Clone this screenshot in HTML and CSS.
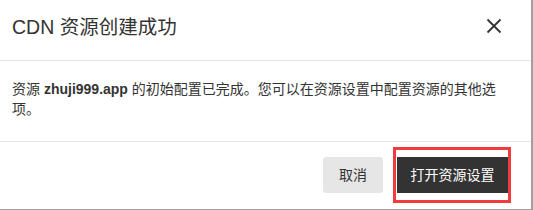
FILE: index.html
```html
<!DOCTYPE html>
<html lang="zh-CN">
<head>
<meta charset="utf-8">
<link rel="stylesheet" href="styles.css">
</head>
<body>
<div class="dialog">
  <div class="dialog-header">
    <h1 class="dialog-title">CDN 资源创建成功</h1>
    <button class="close-btn" aria-label="关闭">
      <svg width="16" height="16" viewBox="0 0 16 16"><path d="M1.5 1.5 L14.5 14.5 M14.5 1.5 L1.5 14.5" stroke="#333" stroke-width="1.8" fill="none"/></svg>
    </button>
  </div>
  <div class="dialog-body">
    <p class="message">资源 <b>zhuji999.app</b> 的初始配置已完成。您可以在资源设置中配置资源的其他选项。</p>
  </div>
  <div class="dialog-footer">
    <button class="btn btn-cancel">取消</button>
    <button class="btn btn-primary">打开资源设置</button>
  </div>
</div>
</body>
</html>
```

FILE: styles.css
```css
* { box-sizing: border-box; }
html, body {
  margin: 0;
  padding: 0;
}
body {
  width: 533px;
  height: 210px;
  background: #a0a0a0;
  font-family: "Liberation Sans", "Noto Sans CJK SC", sans-serif;
  color: #333;
  overflow: hidden;
}
.dialog {
  width: 531px;
  height: 209px;
  background: #fff;
  display: flex;
  flex-direction: column;
}
.dialog-header {
  height: 61px;
  border-bottom: 1px solid #e6e6e6;
  display: flex;
  justify-content: space-between;
  align-items: flex-start;
  padding: 15px 29px 0 12px;
}
.dialog-title {
  margin: 0;
  font-size: 19.5px;
  font-weight: normal;
  line-height: 24px;
  color: #333;
}
.close-btn {
  border: 0;
  background: none;
  padding: 0;
  margin-top: 3px;
  width: 16px;
  height: 16px;
  display: flex;
}
.dialog-body {
  height: 80px;
  padding: 18px 28px 0 12px;
}
.message {
  margin: 0;
  font-size: 14px;
  line-height: 20px;
}
.message b { font-weight: bold; }
.dialog-footer {
  border-top: 1px solid #e6e6e6;
  padding: 15px 23px 16px 12px;
  display: flex;
  justify-content: flex-end;
  gap: 14px;
}
.btn {
  height: 36px;
  border: 0;
  border-radius: 3px;
  font-family: inherit;
  font-size: 14px;
  line-height: 36px;
  padding: 0;
  cursor: pointer;
}
.btn-cancel {
  width: 60px;
  background: #e6e6e6;
  color: #333;
}
.btn-primary {
  width: 111px;
  background: #333;
  color: #fff;
  border-radius: 0;
  position: relative;
}
.btn-primary::after {
  content: "";
  position: absolute;
  top: -10px;
  left: -4px;
  right: -3px;
  bottom: -10px;
  border: 3px solid #f03c3c;
  pointer-events: none;
}
```
